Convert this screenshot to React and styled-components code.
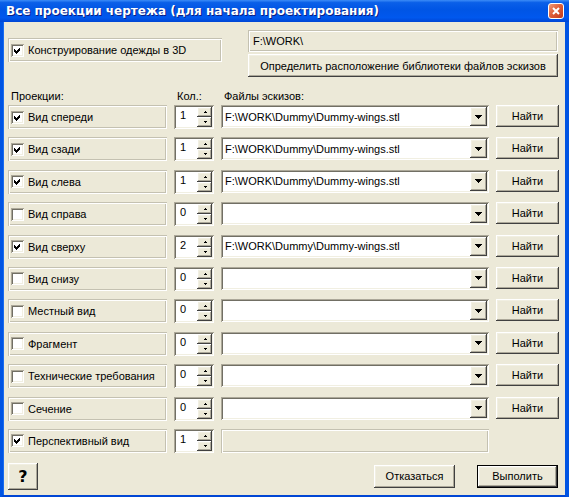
import React from 'react';
import styled, { createGlobalStyle, css } from 'styled-components';

const GlobalStyle = createGlobalStyle`
  html, body {
    margin: 0;
    padding: 0;
    background: #ece9d8;
  }
  body {
    font-family: "Liberation Sans", Arial, sans-serif;
    font-size: 11px;
    color: #000;
  }
`;

const raised = css`
  background: #ece9d8;
  box-shadow: inset -1px -1px #404040, inset 1px 1px #ffffff,
    inset -2px -2px #aca899, inset 2px 2px #f1efe2;
`;

const sunken = css`
  background: #fff;
  box-shadow: inset 1px 1px #aca899, inset -1px -1px #ffffff,
    inset 2px 2px #716f64, inset -2px -2px #f1efe2;
`;

const etched = css`
  box-shadow: inset 1px 1px #c4c1b1, inset -1px -1px #ffffff,
    inset 2px 2px #ffffff, inset -2px -2px #c4c1b1;
`;

const Window = styled.div`
  width: 569px;
  height: 497px;
  display: flex;
  flex-direction: column;
  box-sizing: border-box;
`;

const TitleBar = styled.div`
  height: 22px;
  flex: none;
  display: flex;
  align-items: center;
  justify-content: space-between;
  padding: 0 5px 0 6px;
  background: linear-gradient(
    to bottom,
    #3c8cf7 0%,
    #0a5fe8 12%,
    #0055e5 45%,
    #0058ee 80%,
    #0046d4 100%
  );
`;

const Title = styled.span`
  color: #fff;
  font-family: "DejaVu Sans", sans-serif;
  font-weight: bold;
  font-size: 12px;
  text-shadow: 1px 1px #0a1e84;
`;

const CloseButton = styled.div`
  width: 16px;
  height: 16px;
  box-sizing: border-box;
  border: 1px solid #fff;
  border-radius: 3px;
  background: linear-gradient(135deg, #ee9a7a 0%, #e0603a 45%, #c0391b 100%);
  display: flex;
  align-items: center;
  justify-content: center;
`;

const Body = styled.div`
  flex: 1;
  display: flex;
  flex-direction: column;
  background: #ece9d8;
  border-left: 3px solid #0054e3;
  border-right: 4px solid #0054e3;
  border-bottom: 4px solid #0046d4;
  padding: 8px 7px 5px 5px;
  box-shadow: inset 1px 0 #1a6cf0;
`;

const TopSection = styled.div`
  display: flex;
  justify-content: space-between;
  align-items: flex-start;
`;

const Frame = styled.div`
  ${etched};
  box-sizing: border-box;
  height: ${(p) => p.$h || 24}px;
  width: ${(p) => (p.$w ? `${p.$w}px` : 'auto')};
  margin-top: ${(p) => p.$mt || 0}px;
  display: flex;
  align-items: center;
  padding-left: 3px;
  gap: 4px;
`;

const LibPanel = styled.div`
  width: 310px;
  display: flex;
  flex-direction: column;
  gap: 2px;
`;

const PathBox = styled.div`
  ${etched};
  height: 22px;
  display: flex;
  align-items: center;
  padding-left: 5px;
`;

const Button = styled.button`
  ${raised};
  border: none;
  margin: 0;
  padding: 0;
  font: inherit;
  color: #000;
  height: ${(p) => p.$h || 23}px;
  width: ${(p) => (p.$w ? `${p.$w}px` : '100%')};
  display: flex;
  align-items: center;
  justify-content: center;
  ${(p) =>
    p.$default &&
    css`
      outline: 1px solid #000;
      outline-offset: -1px;
      box-shadow: inset -2px -2px #404040, inset 2px 2px #ffffff,
        inset -3px -3px #aca899, inset 3px 3px #f1efe2;
    `}
`;

const Grid = styled.div`
  display: grid;
  grid-template-columns: 159px 40px 268px 63px;
  column-gap: 7px;
  row-gap: 8.4px;
  grid-auto-rows: 24px;
`;

const HeaderGrid = styled(Grid)`
  grid-auto-rows: 13px;
  margin: 13px 0 2px;
`;

const HeaderLabel = styled.span`
  padding-left: 3px;
  line-height: 13px;
`;

const CheckBoxBox = styled.span`
  ${sunken};
  width: 13px;
  height: 13px;
  flex: none;
  display: inline-flex;
  align-items: center;
  justify-content: center;
`;

const Label = styled.span`
  white-space: nowrap;
`;

const Spin = styled.div`
  ${sunken};
  box-sizing: border-box;
  height: 24px;
  display: flex;
  padding: 2px;
`;

const SpinValue = styled.span`
  flex: 1;
  padding: 2px 0 0 4px;
  line-height: 13px;
`;

const SpinButtons = styled.div`
  width: 15px;
  display: flex;
  flex-direction: column;
`;

const SpinArrow = styled.div`
  ${raised};
  flex: 1;
  display: flex;
  align-items: center;
  justify-content: center;
`;

const Combo = styled.div`
  ${sunken};
  box-sizing: border-box;
  height: 23px;
  display: flex;
  align-items: center;
  padding: 2px;
`;

const ComboText = styled.span`
  flex: 1;
  padding-left: 2px;
  white-space: nowrap;
  overflow: hidden;
`;

const DropButton = styled.div`
  ${raised};
  width: 17px;
  height: 100%;
  display: flex;
  align-items: center;
  justify-content: center;
`;

const DisabledBox = styled.div`
  ${etched};
  height: 24px;
`;

const Footer = styled.div`
  display: flex;
  align-items: flex-start;
  margin-top: 10px;
`;

const HelpText = styled.span`
  font-family: "DejaVu Sans", sans-serif;
  font-weight: bold;
  font-size: 16px;
`;

const FooterButtons = styled.div`
  margin-left: auto;
  margin-top: 2px;
  display: flex;
  gap: 22px;
`;

const CheckMark = () => (
  <svg width="7" height="7" viewBox="0 0 7 7" shapeRendering="crispEdges">
    <polygon points="0,2 2,4 6,0 6,3 2,7 0,5" fill="#000" />
  </svg>
);

const CheckBox = ({ checked }) => (
  <CheckBoxBox>{checked && <CheckMark />}</CheckBoxBox>
);

const Triangle = ({ down, w = 5, h = 3 }) => (
  <svg width={w} height={h} viewBox={`0 0 ${w} ${h}`} shapeRendering="crispEdges">
    <polygon
      points={down ? `0,0 ${w},0 ${w / 2},${h}` : `${w / 2},0 ${w},${h} 0,${h}`}
      fill="#000"
    />
  </svg>
);

const SpinBox = ({ value }) => (
  <Spin>
    <SpinValue>{value}</SpinValue>
    <SpinButtons>
      <SpinArrow>
        <Triangle w={4} h={2} />
      </SpinArrow>
      <SpinArrow>
        <Triangle down w={4} h={2} />
      </SpinArrow>
    </SpinButtons>
  </Spin>
);

const ComboBox = ({ value }) => (
  <Combo>
    <ComboText>{value}</ComboText>
    <DropButton>
      <Triangle down w={7} h={4} />
    </DropButton>
  </Combo>
);

const FILE = 'F:\\WORK\\Dummy\\Dummy-wings.stl';

const projections = [
  { name: 'Вид спереди', checked: true, count: 1, file: FILE },
  { name: 'Вид сзади', checked: true, count: 1, file: FILE },
  { name: 'Вид слева', checked: true, count: 1, file: FILE },
  { name: 'Вид справа', checked: false, count: 0, file: '' },
  { name: 'Вид сверху', checked: true, count: 2, file: FILE },
  { name: 'Вид снизу', checked: false, count: 0, file: '' },
  { name: 'Местный вид', checked: false, count: 0, file: '' },
  { name: 'Фрагмент', checked: false, count: 0, file: '' },
  { name: 'Технические требования', checked: false, count: 0, file: '' },
  { name: 'Сечение', checked: false, count: 0, file: '' },
];

export default function App() {
  return (
    <>
      <GlobalStyle />
      <Window>
        <TitleBar>
          <Title>Все проекции чертежа (для начала проектирования)</Title>
          <CloseButton>
            <svg width="8" height="8" viewBox="0 0 8 8">
              <path d="M1 1 L7 7 M7 1 L1 7" stroke="#fff" strokeWidth="2" />
            </svg>
          </CloseButton>
        </TitleBar>
        <Body>
          <TopSection>
            <Frame $w={214} $mt={8}>
              <CheckBox checked />
              <Label>Конструирование одежды в 3D</Label>
            </Frame>
            <LibPanel>
              <PathBox>F:\WORK\</PathBox>
              <Button>Определить расположение библиотеки файлов эскизов</Button>
            </LibPanel>
          </TopSection>

          <HeaderGrid>
            <HeaderLabel>Проекции:</HeaderLabel>
            <HeaderLabel>Кол.:</HeaderLabel>
            <HeaderLabel>Файлы эскизов:</HeaderLabel>
          </HeaderGrid>

          <Grid>
            {projections.map((p) => (
              <React.Fragment key={p.name}>
                <Frame>
                  <CheckBox checked={p.checked} />
                  <Label>{p.name}</Label>
                </Frame>
                <SpinBox value={p.count} />
                <ComboBox value={p.file} />
                <Button $h={22}>Найти</Button>
              </React.Fragment>
            ))}
            <Frame>
              <CheckBox checked />
              <Label>Перспективный вид</Label>
            </Frame>
            <SpinBox value={1} />
            <DisabledBox />
          </Grid>

          <Footer>
            <Button $w={30} $h={27}>
              <HelpText>?</HelpText>
            </Button>
            <FooterButtons>
              <Button $w={81}>Отказаться</Button>
              <Button $w={81} $default>
                Выполить
              </Button>
            </FooterButtons>
          </Footer>
        </Body>
      </Window>
    </>
  );
}
